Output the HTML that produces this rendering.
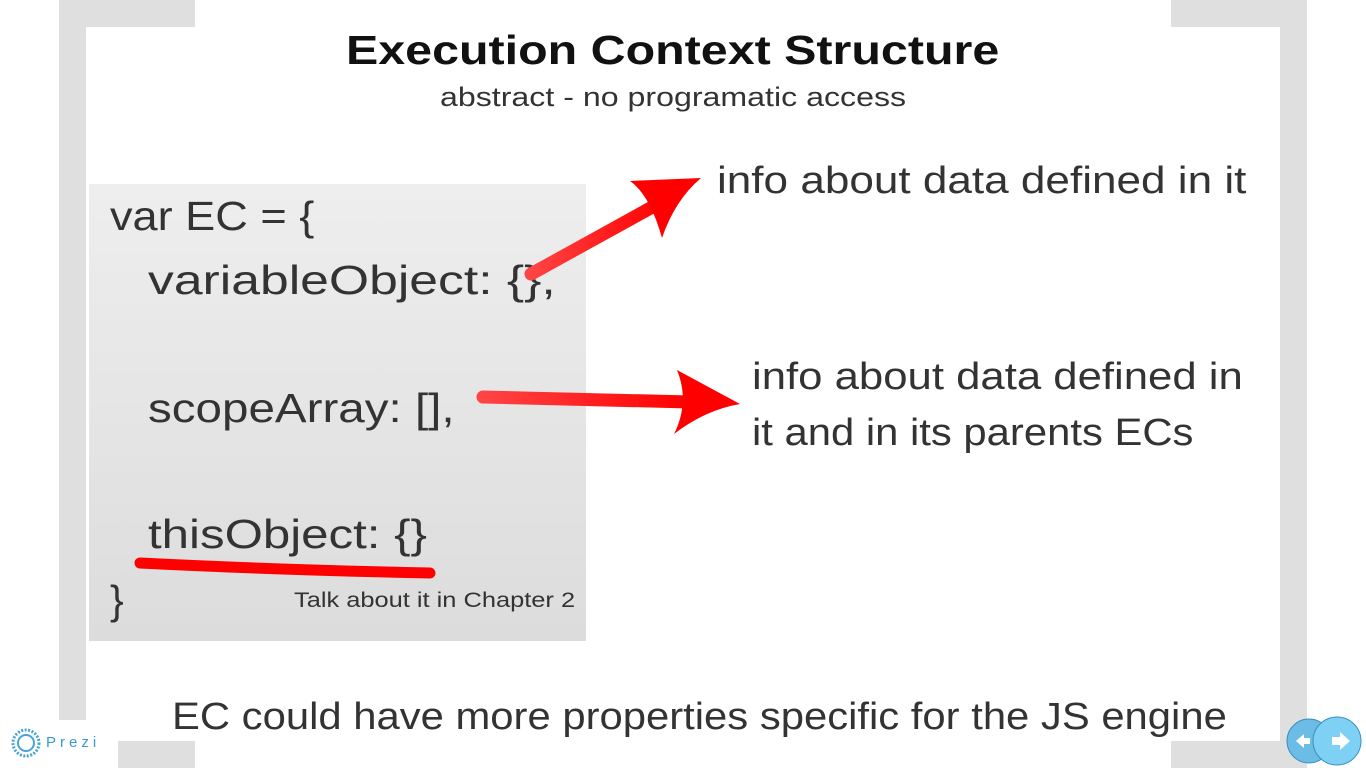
<!DOCTYPE html>
<html><head><meta charset="utf-8"><style>
body{margin:0;width:1366px;height:768px;background:#fff;position:relative;overflow:hidden;font-family:"Liberation Sans","DejaVu Sans",sans-serif;color:#333}
.g{position:absolute;background:#dfdfdf}
.t{position:absolute;white-space:nowrap;line-height:1;transform-origin:0 0}
</style></head><body>
<div class="g" style="left:59px;top:0;width:136px;height:27px"></div>
<div class="g" style="left:59px;top:0;width:27px;height:720px"></div>
<div class="g" style="left:118px;top:741px;width:77px;height:27px"></div>
<div class="g" style="left:1171px;top:0;width:136px;height:27px"></div>
<div class="g" style="left:1280px;top:0;width:27px;height:768px"></div>
<div class="g" style="left:1171px;top:741px;width:136px;height:27px"></div>
<div style="position:absolute;left:0;top:720px;width:118px;height:48px;background:#fff;border-radius:0 0 6px 0"></div>
<div style="position:absolute;left:89px;top:184px;width:497px;height:457px;background:linear-gradient(#eeeeee,#dcdcdc)"></div>
<div class="t" style="left:346px;top:30px;font-size:41px;font-weight:bold;color:#111;transform:scaleX(1.18)">Execution Context Structure</div>
<div class="t" style="left:440px;top:84px;font-size:27px;color:#333;transform:scaleX(1.19)">abstract - no programatic access</div>
<div class="t" style="left:110px;top:196px;font-size:41px;transform:scaleX(1.10)">var EC = {</div>
<div class="t" style="left:148px;top:260px;font-size:41px;transform:scaleX(1.26)">variableObject: {},</div>
<div class="t" style="left:148px;top:388px;font-size:41px;transform:scaleX(1.16)">scopeArray: [],</div>
<div class="t" style="left:148px;top:514px;font-size:41px;transform:scaleX(1.20)">thisObject: {}</div>
<div class="t" style="left:110px;top:580px;font-size:41px">}</div>
<div class="t" style="left:294px;top:590px;font-size:21px;transform:scaleX(1.21)">Talk about it in Chapter 2</div>
<div class="t" style="left:717px;top:162px;font-size:38px;transform:scaleX(1.16)">info about data defined in it</div>
<div class="t" style="left:752px;top:358px;font-size:38px;transform:scaleX(1.15)">info about data defined in</div>
<div class="t" style="left:752px;top:414px;font-size:38px;transform:scaleX(1.10)">it and in its parents ECs</div>
<div class="t" style="left:172px;top:698px;font-size:38px;transform:scaleX(1.10)">EC could have more properties specific for the JS engine</div>
<svg style="position:absolute;left:0;top:0" width="1366" height="768">
<defs><linearGradient id="r" x1="0" x2="1"><stop offset="0" stop-color="#f44"/><stop offset="1" stop-color="#f00"/></linearGradient></defs>
<line x1="531" y1="274" x2="665" y2="200" stroke="url(#r)" stroke-width="13" stroke-linecap="round"/>
<path d="M701 178 L630 181 Q650 195 662 238 Q675 200 701 178Z" fill="#f00"/>
<line x1="483" y1="397" x2="690" y2="402" stroke="url(#r)" stroke-width="13" stroke-linecap="round"/>
<path d="M740 404 L677 370 Q690 402 674 434 Q705 410 740 404Z" fill="#f00"/>
<path d="M140 563 Q280 570 430 573" stroke="#f00" stroke-width="11" fill="none" stroke-linecap="round"/>
<circle cx="26" cy="743" r="13" fill="none" stroke="#4aa3d6" stroke-width="3" stroke-dasharray="2 1.5"/>
<circle cx="26" cy="743" r="8" fill="none" stroke="#4aa3d6" stroke-width="2"/>
<circle cx="1309" cy="741" r="22" fill="#6cbde6" stroke="#3b8fc0"/>
<circle cx="1337" cy="741" r="24" fill="#7fd0f5" stroke="#3b8fc0"/>
<path d="M1296 741 l8 -7 v4 h6 v6 h-6 v4z" fill="#fff"/>
<path d="M1350 741 l-10 -9 v5 h-8 v8 h8 v5z" fill="#fff"/>
</svg>
<div class="t" style="left:46px;top:735px;font-size:15px;color:#3a9ad0;letter-spacing:4px">Prezi</div>
</body></html>
